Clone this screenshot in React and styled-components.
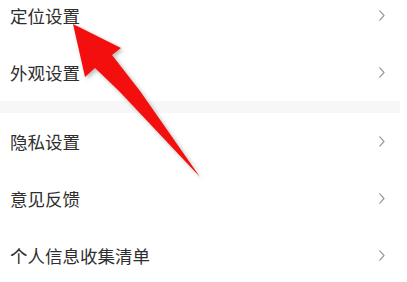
import React from 'react';
import styled, { createGlobalStyle } from 'styled-components';

const GlobalStyle = createGlobalStyle`
  html, body {
    margin: 0;
    padding: 0;
    background: #ffffff;
    overflow: hidden;
  }
  body {
    font-family: "Noto Sans CJK SC", "Noto Sans", sans-serif;
  }
`;

const Screen = styled('div')`
  position: relative;
  width: 407px;
  height: 282px;
  overflow: hidden;
  background: #ffffff;
`;

const List = styled('div')`
  display: flex;
  flex-direction: column;
  margin-top: -13px;
`;

const Row = styled('div')`
  display: flex;
  align-items: center;
  justify-content: space-between;
  height: 57px;
  padding: 0 22px 0 10px;
  box-sizing: border-box;
  background: #ffffff;
`;

const Label = styled('span')`
  font-size: 17.5px;
  line-height: 1;
  color: #2e2e2e;
`;

const Divider = styled('div')`
  height: 12px;
  margin-right: 7px;
  background: #f7f7f7;
`;

const Chevron = styled('svg')`
  width: 6px;
  height: 11px;
  flex-shrink: 0;
`;

const ArrowLayer = styled('svg')`
  position: absolute;
  left: 0;
  top: 0;
  width: 407px;
  height: 282px;
  pointer-events: none;
  filter: drop-shadow(2px 2px 2px rgba(0, 0, 0, 0.28));
`;

const groups = [
  ['定位设置', '外观设置'],
  ['隐私设置', '意见反馈', '个人信息收集清单'],
];

const Arrow = () => (
  <Chevron viewBox="0 0 6 11">
    <polyline
      points="0.8,0.8 5,5.5 0.8,10.2"
      fill="none"
      stroke="#9a9a9a"
      strokeWidth="1.2"
      strokeLinejoin="round"
      strokeLinecap="round"
    />
  </Chevron>
);

export default function App() {
  return (
    <Screen>
      <GlobalStyle />
      <List>
        {groups.map((group, gi) => (
          <React.Fragment key={gi}>
            {gi > 0 && <Divider />}
            {group.map(item => (
              <Row key={item}>
                <Label>{item}</Label>
                <Arrow />
              </Row>
            ))}
          </React.Fragment>
        ))}
      </List>
      {/* red pointer drawn over the list */}
      <ArrowLayer viewBox="0 0 407 282">
        <polygon
          points="73,24 121,48 112,55 140,91 200,177 119,91 95,68 85,77"
          fill="#f40f0f"
          strokeLinejoin="round"
        />
      </ArrowLayer>
    </Screen>
  );
}
